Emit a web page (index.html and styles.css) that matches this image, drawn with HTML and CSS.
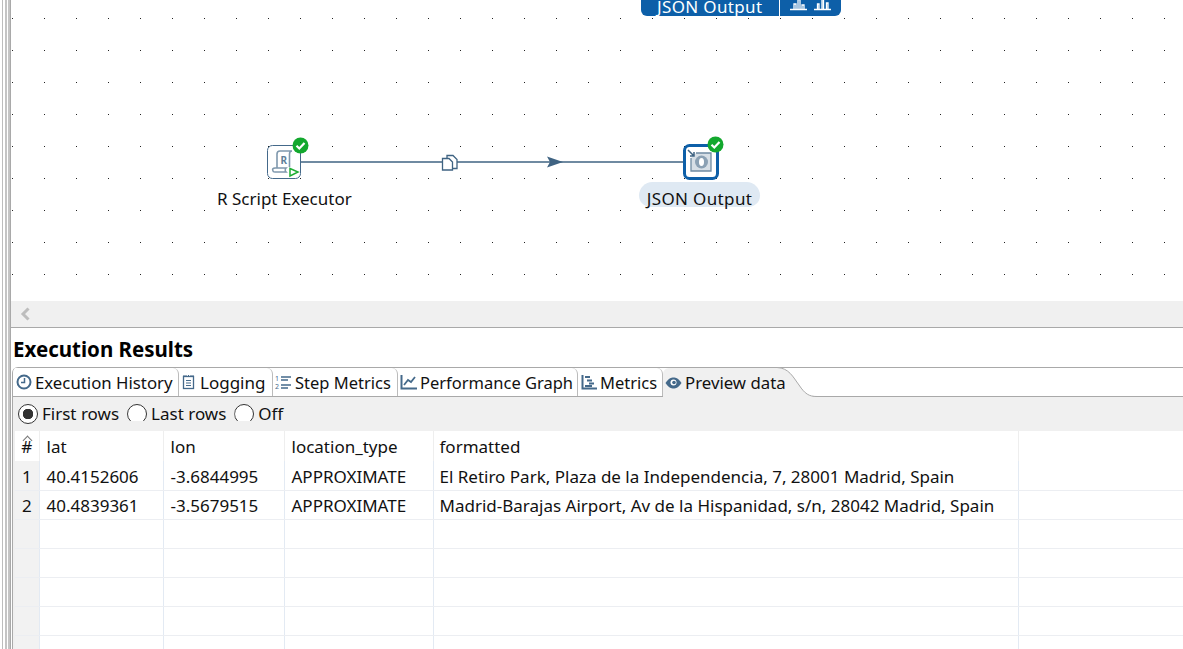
FILE: index.html
```html
<!DOCTYPE html>
<html lang="en">
<head>
    <meta charset="UTF-8">
    <title>Execution Results</title>
    <link rel="stylesheet" href="styles.css">
</head>
<body>

<div class="sash"></div>

<div class="main">
    <div class="canvas">
        <div class="node-toolbar">
            <span class="toolbar-name">JSON Output</span>
            <span class="toolbar-icons">
                <svg width="17" height="13" viewBox="0 0 17 13"><path d="M0 11.500h17M4 11V6h2v5M8 11V1.500h2V11M12 11V7h2v4" stroke="#fff" stroke-width="1.300" fill="none"/></svg>
                <svg width="17" height="13" viewBox="0 0 17 13"><path d="M0 11.500h17M3.500 11V6h1.500v5M8 11V0h1.500v11M12.500 11V5H14v6" stroke="#fff" stroke-width="1.300" fill="none"/></svg>
            </span>
        </div>

        <svg class="hop" width="383" height="20" viewBox="0 0 383 20">
            <path d="M0 10H383" stroke="#3f6382" stroke-width="1.300"/>
            <path d="M247 4.500L263 10L247 15.500L250 10Z" fill="#3f6382"/>
            <path d="M147 3.500h6l4 4v9h-5v-6l-3-3h-2z" fill="#fff" stroke="#3f6382" stroke-width="1.300"/>
            <path d="M142.500 6.500h6.500l3.500 3.500v8h-10z" fill="#fff" stroke="#3f6382" stroke-width="1.300"/>
        </svg>

        <div class="step step-r">
            <svg width="34" height="34" viewBox="0 0 34 34">
                <rect x="0.500" y="0.500" width="33" height="33" rx="5" fill="#fff" stroke="#44698a"/>
                <path d="M10 23V9c0-2 1-3 3-3h12c-2 0-2.500 1-2.500 3v13" fill="none" stroke="#7f98ad" stroke-width="1.600"/>
                <path d="M6 26c-1-2 0-3 2-3h11c-1 1-1 3 0 4H8c-1 0-2 0-2-1z" fill="#fff" stroke="#7f98ad" stroke-width="1.600"/>
                <text x="13.500" y="19" class="r-letter">R</text>
                <path d="M23 23.500L31 27L23 31Z" fill="#fff" stroke="#1fae35" stroke-width="1.500"/>
            </svg>
            <svg class="check" width="17" height="17" viewBox="0 0 17 17"><circle cx="8.500" cy="8.500" r="8" fill="#13a82e"/><path d="M4.500 8.800L7.300 11.500L12.500 6" fill="none" stroke="#fff" stroke-width="2.200"/></svg>
        </div>
        <div class="step-label label-r">R Script Executor</div>

        <div class="step step-json">
            <svg width="36" height="36" viewBox="0 0 36 36">
                <rect x="1.500" y="1.500" width="33" height="33" rx="5" fill="#fff" stroke="#0d5fa8" stroke-width="3"/>
                <path d="M8 14v13h20V9H13" fill="#d7dfe6" stroke="#6f8ba2" stroke-width="1.300"/>
                <path d="M5 6l6 6M11 8v4H7" fill="none" stroke="#3f6382" stroke-width="1.500"/>
                <circle cx="18.500" cy="18" r="6.500" fill="#8ba1b4"/>
                <ellipse cx="18.500" cy="18" rx="2.500" ry="4" fill="#fff"/>
            </svg>
            <svg class="check" width="17" height="17" viewBox="0 0 17 17"><circle cx="8.500" cy="8.500" r="8" fill="#13a82e"/><path d="M4.500 8.800L7.300 11.500L12.500 6" fill="none" stroke="#fff" stroke-width="2.200"/></svg>
        </div>
        <div class="step-label label-json">JSON Output</div>
    </div>

    <div class="scrollbar">
        <svg width="10" height="14" viewBox="0 0 10 14"><path d="M8.500 1.500L3 7L8.500 12.500" fill="none" stroke="#bdbdbd" stroke-width="3"/></svg>
    </div>

    <h2 class="results-title">Execution Results</h2>

    <div class="panel">
        <div class="tabs">
            <div class="tab tab-history">
                <svg width="16" height="16" viewBox="0 0 16 16"><circle cx="8" cy="8" r="6.500" fill="none" stroke="#44698a" stroke-width="2"/><path d="M8.500 4v4.500H5" fill="none" stroke="#44698a" stroke-width="1.500"/></svg>
                Execution History
            </div>
            <div class="tab tab-logging">
                <svg width="16" height="16" viewBox="0 0 16 16"><rect x="2.500" y="2.500" width="10" height="12" fill="none" stroke="#44698a" stroke-width="1.300"/><path d="M3 1v2M5 1v2M7.500 1v2M10 1v2M12 1v2M5 6.500h5M5 9h5M5 11.500h5" stroke="#44698a"/></svg>
                Logging
            </div>
            <div class="tab tab-step">
                <svg width="17" height="16" viewBox="0 0 17 16"><path d="M6 3h10M6 6h7M6 11h10M6 14h7" stroke="#44698a" stroke-width="1.300"/><text x="0" y="7" class="tab-num">1</text><text x="0" y="15" class="tab-num">2</text></svg>
                Step Metrics
            </div>
            <div class="tab tab-perf">
                <svg width="17" height="16" viewBox="0 0 17 16"><path d="M1.500 1v13.500H17" fill="none" stroke="#44698a" stroke-width="2"/><path d="M4 11L8 6L11 8L15 3" fill="none" stroke="#44698a" stroke-width="1.800"/></svg>
                Performance Graph
            </div>
            <div class="tab tab-metrics">
                <svg width="16" height="16" viewBox="0 0 16 16"><path d="M1.500 1v13.500H16" fill="none" stroke="#44698a" stroke-width="2"/><path d="M4 3h5M6 6.500h5M8 9.500h5M4 12h7" stroke="#44698a" stroke-width="1.800"/></svg>
                Metrics
            </div>
            <div class="tab tab-active">
                <svg width="17" height="12" viewBox="0 0 16 12"><path d="M0 6C3 1.500 5.500 0.500 8 0.500S13 1.500 16 6C13 10.500 10.500 11.500 8 11.500S3 10.500 0 6Z" fill="#44698a"/><circle cx="8" cy="5.500" r="3" fill="#fff"/><circle cx="8.500" cy="5.500" r="1.800" fill="#44698a"/></svg>
                Preview data
            </div>
            <svg class="tab-curve" width="40" height="31" viewBox="0 0 40 31"><path d="M0 0.500C12 1 16 10 22 18C28 27 32 29.500 40 29.500V31H0Z" fill="#f0f0f0"/><path d="M0 0.500C12 1 16 10 22 18C28 27 32 29.500 40 29.500" fill="none" stroke="#a9a9a9"/></svg>
        </div>

        <div class="preview-options">
            <label class="radio radio-on">First rows</label>
            <label class="radio">Last rows</label>
            <label class="radio">Off</label>
        </div>

        <table class="preview-table">
            <colgroup>
                <col class="col-num"><col class="col-lat"><col class="col-lon"><col class="col-type"><col class="col-formatted"><col>
            </colgroup>
            <thead>
            <tr>
                <th class="num-head">#</th>
                <th>lat</th>
                <th>lon</th>
                <th>location_type</th>
                <th>formatted</th>
                <th></th>
            </tr>
            </thead>
            <tbody>
            <tr>
                <td class="num">1</td><td>40.4152606</td><td>-3.6844995</td><td>APPROXIMATE</td>
                <td>El Retiro Park, Plaza de la Independencia, 7, 28001 Madrid, Spain</td><td></td>
            </tr>
            <tr>
                <td class="num">2</td><td>40.4839361</td><td>-3.5679515</td><td>APPROXIMATE</td>
                <td>Madrid-Barajas Airport, Av de la Hispanidad, s/n, 28042 Madrid, Spain</td><td></td>
            </tr>
            <tr><td class="num"></td><td></td><td></td><td></td><td></td><td></td></tr>
            <tr><td class="num"></td><td></td><td></td><td></td><td></td><td></td></tr>
            <tr><td class="num"></td><td></td><td></td><td></td><td></td><td></td></tr>
            <tr><td class="num"></td><td></td><td></td><td></td><td></td><td></td></tr>
            <tr><td class="num"></td><td></td><td></td><td></td><td></td><td></td></tr>
            </tbody>
        </table>
    </div>
</div>

</body>
</html>
```

FILE: styles.css
```css
html, body {
    height: 100%;
}
body {
    margin: 0;
    display: flex;
    overflow: hidden;
    background: #fff;
    color: #111;
    font-family: "Noto Sans", "Open Sans", sans-serif;
    font-size: 17px;
}
.sash {
    flex: 0 0 10px;
    background: linear-gradient(90deg, #fff 0, #fff 2px, #bdbdbd 2px, #bdbdbd 3px, #fff 3px, #fff 5px, #c4c4c4 5px, #c4c4c4 7px, #fff 7px, #fff 8px, #c4c4c4 8px, #c4c4c4 10px);
}
.main {
    flex: 1;
    min-width: 0;
    display: flex;
    flex-direction: column;
    border-left: 1px solid #a9a9a9;
}
.canvas {
    position: relative;
    height: 301px;
    flex: none;
    background-color: #fff;
    background-image: radial-gradient(circle at 0.5px 0.5px, #222 0.6px, transparent 0.7px);
    background-size: 32px 32px;
    background-position: 1px 18px;
}
.node-toolbar {
    position: absolute;
    left: 630px;
    top: -6px;
    width: 200px;
    height: 22px;
    box-sizing: border-box;
    padding: 4px 0 0 16px;
    display: flex;
    align-items: center;
    gap: 10px;
    background: #0d5fa8;
    border-radius: 0 0 6px 6px;
    color: #fff;
}
.toolbar-name {
    padding-right: 17px;
    border-right: 1px solid #fff;
    line-height: 18px;
    letter-spacing: 0.35px;
}
.toolbar-icons {
    display: flex;
    gap: 7px;
    margin-top: -5px;
}
.hop {
    position: absolute;
    left: 289px;
    top: 152px;
}
.step {
    position: absolute;
}
.step-r {
    left: 256px;
    top: 145px;
    width: 34px;
    height: 34px;
}
.step-json {
    left: 672px;
    top: 144px;
    width: 36px;
    height: 36px;
}
.check {
    position: absolute;
    right: -8px;
    top: -8px;
}
.step-json .check {
    right: -5px;
}
.r-letter {
    font-size: 10px;
    font-weight: 700;
    fill: #5f7f99;
}
.tab-num {
    font-size: 7px;
    fill: #44698a;
}
.step-label {
    position: absolute;
    white-space: nowrap;
    line-height: 26px;
}
.label-r {
    left: 206px;
    top: 186px;
}
.label-json {
    left: 628px;
    top: 182px;
    width: 121px;
    height: 25px;
    line-height: 33px;
    text-align: center;
    letter-spacing: 0.35px;
    background: #dfe9f3;
    border-radius: 14px 14px 12px 12px;
}
.scrollbar {
    flex: none;
    height: 26px;
    box-sizing: border-box;
    background: #f0f0f0;
    display: flex;
    align-items: center;
    padding-left: 9px;
}
.results-title {
    flex: none;
    margin: 0;
    height: 40px;
    box-sizing: border-box;
    border-top: 1px solid #a9a9a9;
    padding-left: 2px;
    font-size: 20.500px;
    line-height: 42px;
    font-weight: 700;
    color: #000;
}
.panel {
    flex: 1;
    min-height: 0;
    margin-left: 1px;
    border-left: 1px solid #a9a9a9;
    border-top-left-radius: 6px;
    background: #f0f0f0;
    overflow: hidden;
}
.tabs {
    height: 30px;
    box-sizing: border-box;
    display: flex;
    background: #fff;
    border-top: 1px solid #a9a9a9;
    border-bottom: 1px solid #a9a9a9;
    font-size: 16.500px;
}
.tab {
    flex: none;
    box-sizing: border-box;
    display: flex;
    align-items: center;
    gap: 3px;
    padding-left: 2px;
    border-right: 1px solid #bbb;
    border-top-right-radius: 6px;
    white-space: nowrap;
}
.tab svg {
    flex: none;
}
.tab-history { width: 166px; padding-left: 3px; font-size: 16.800px; }
.tab-logging { width: 94px; font-size: 17px; }
.tab-step { width: 125px; }
.tab-perf { width: 180px; }
.tab-metrics { width: 85px; padding-left: 3px; }
.tab-active {
    position: relative;
    z-index: 1;
    width: 114px;
    background: #f0f0f0;
    border-right: none;
    border-radius: 6px 0 0 0;
    margin-bottom: -1px;
    font-size: 16.800px;
}
.tab-curve {
    flex: none;
    margin-top: -1px;
}
.preview-options {
    height: 34px;
    box-sizing: border-box;
    display: flex;
    align-items: flex-start;
    gap: 8px;
    padding: 7px 0 0 5px;
}
.radio {
    display: flex;
    align-items: flex-start;
    gap: 4px;
    line-height: 20px;
}
.radio::before {
    content: "";
    flex: none;
    width: 20px;
    height: 20px;
    box-sizing: border-box;
    border: 1px solid #333;
    border-radius: 50%;
    background: #fff;
    clip-path: inset(0 0 3px 0);
}
.radio-on::before {
    background: radial-gradient(circle, #333 0, #333 5px, #fff 5.500px);
    clip-path: none;
}
.preview-table {
    table-layout: fixed;
    width: 1180px;
    border-collapse: collapse;
    margin-left: 2px;
    background: #fff;
}
.col-num { width: 24px; }
.col-lat { width: 124px; }
.col-lon { width: 121px; }
.col-type { width: 149px; }
.col-formatted { width: 585px; }
th, td {
    height: 29px;
    box-sizing: border-box;
    padding: 2px 7px 0;
    text-align: left;
    font-weight: 400;
    white-space: nowrap;
    border-right: 1px solid #e3eaf3;
    border-bottom: 1px solid #eceef2;
}
th:nth-child(5), td:nth-child(5) {
    padding-left: 6px;
}
th {
    height: 30px;
    padding-top: 1px;
    border-bottom: none;
    border-right-color: #eeeeee;
}
.num-head {
    position: relative;
    text-align: center;
    padding: 0;
}
.num-head::before {
    content: "";
    position: absolute;
    left: 9px;
    top: 6px;
    width: 6px;
    height: 6px;
    border-top: 1px solid #777;
    border-left: 1px solid #777;
    transform: rotate(45deg);
}
.num {
    background: #f2f2f2;
    text-align: center;
    padding: 2px 0 0;
}
```
